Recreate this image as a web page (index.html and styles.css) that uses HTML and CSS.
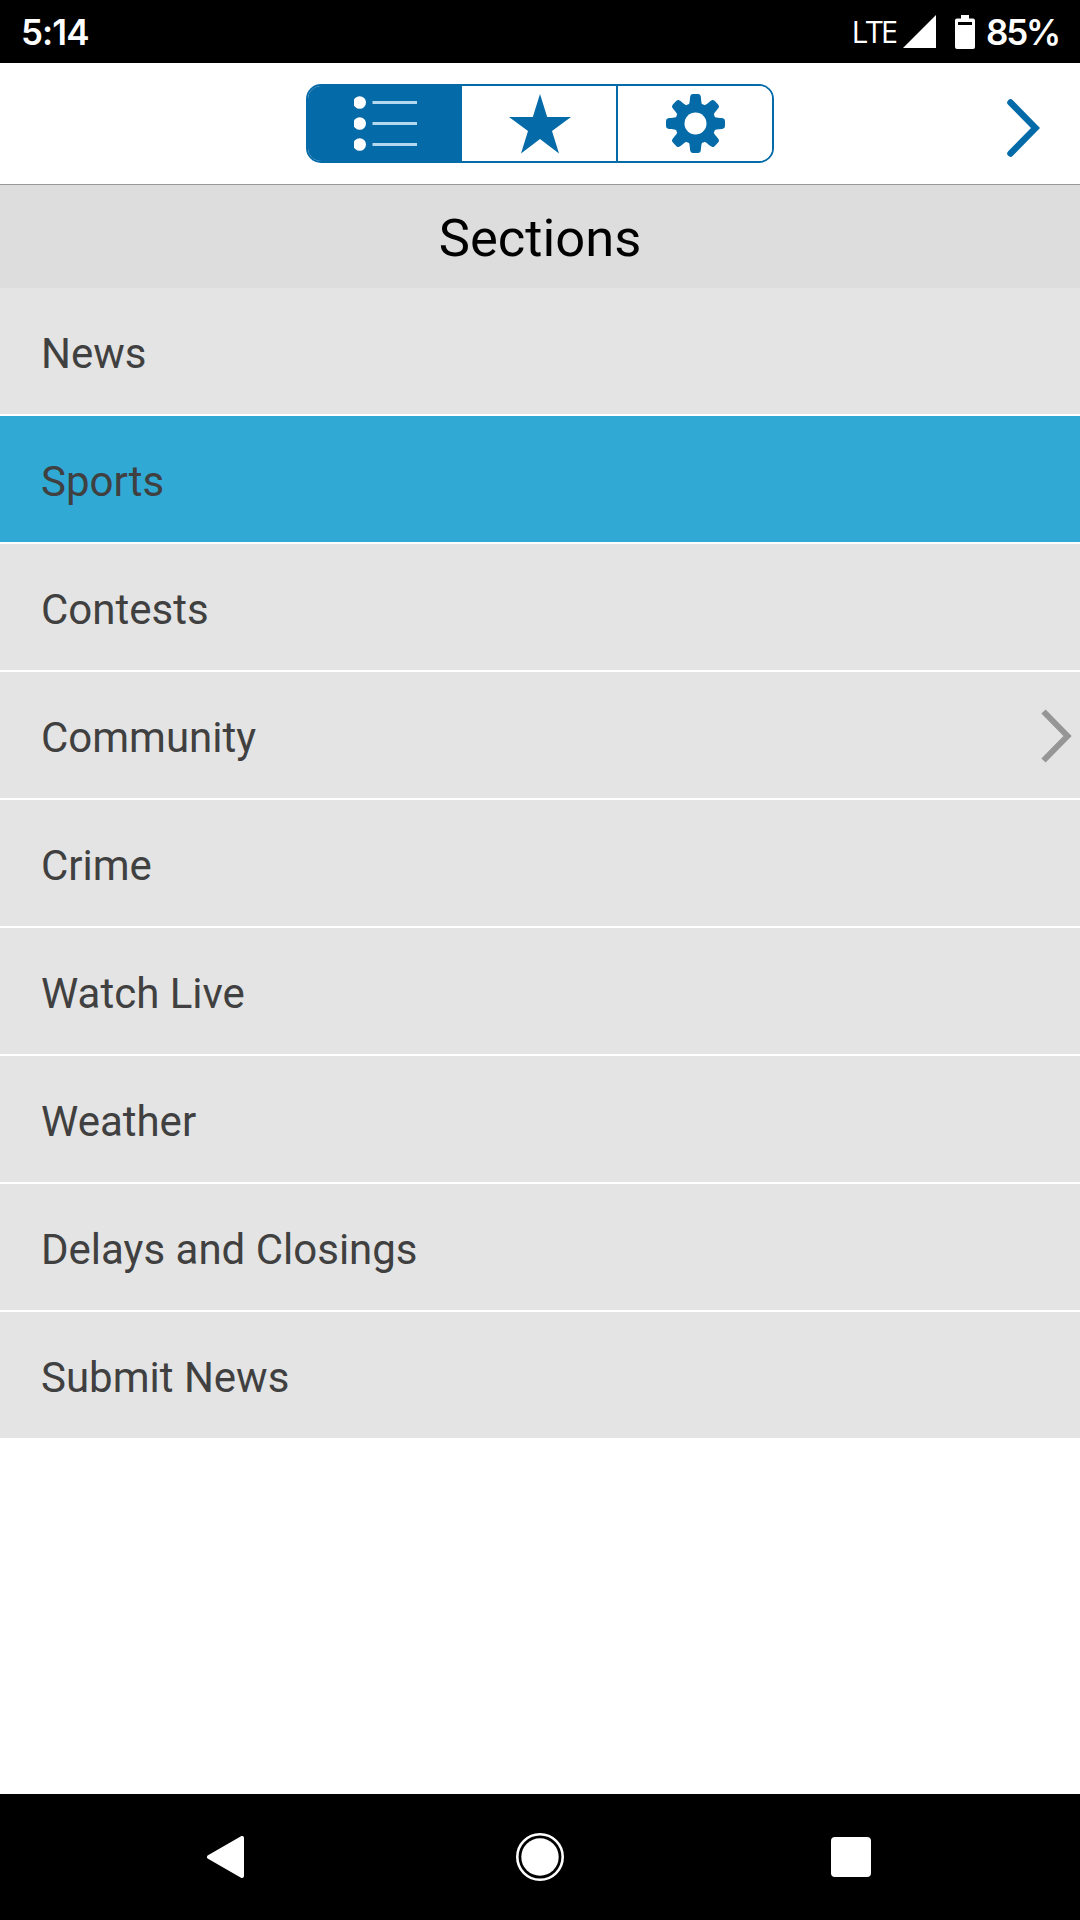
FILE: index.html
```html
<!DOCTYPE html>
<html lang="en">
<head>
  <meta charset="UTF-8">
  <title>Sections</title>
  <meta name="viewport" content="width=device-width, initial-scale=1.0">
  <link rel="stylesheet" href="styles.css">
</head>
<body>

<div class="screen">
  <!-- Status bar -->
  <div class="status-bar">
    <span class="clock">5:14</span>
    <div class="status-icons">
      <span class="network">LTE</span>
      <svg class="signal" width="33" height="33" viewBox="0 0 33 33"><path d="M33 0V33H0Z" fill="#fff"/></svg>
      <svg class="battery" width="20" height="34" viewBox="0 0 20 34"><path fill="#fff" fill-rule="evenodd" d="M6 0h8v3.500h4q2 0 2 2V32q0 2-2 2H2q-2 0-2-2V5.500q0-2 2-2h4ZM3 7v3h14V7Z"/></svg>
      <span class="percent">85%</span>
    </div>
  </div>

  <!-- Top tabs -->
  <header class="header">
    <div class="tabs">
      <button class="tab-btn active" aria-label="Sections">
        <svg width="63" height="57" viewBox="0 0 63 57">
          <g fill="#fff">
            <circle cx="5.700" cy="7.500" r="6.300"/>
            <circle cx="5.700" cy="28.500" r="6.300"/>
            <circle cx="5.700" cy="49.500" r="6.300"/>
          </g>
          <path d="M18.500 7.500H63M18.500 28.500H63M18.500 49.500H63" stroke="#b4d8ed" stroke-width="3"/>
        </svg>
      </button>
      <button class="tab-btn" aria-label="Favorites">
        <svg class="star" width="62" height="60" viewBox="0 0 62 60"><path fill="#056ba8" d="M31 0L38.200 23H62L43 37L50 59.500L31 45L12 59.500L19 37L0 23H23.800Z"/></svg>
      </button>
      <button class="tab-btn" aria-label="Settings">
        <svg width="59" height="59" viewBox="0 0 59 59">
          <g fill="#056ba8">
            <path id="tooth" d="M20 14C24.500 11 23.500 6 24.300 2Q24.700 0 27 0H32Q34.300 0 34.700 2C35.500 6 34.500 11 39 14V45C34.500 48 35.500 53 34.700 57Q34.300 59 32 59H27Q24.700 59 24.300 57C23.500 53 24.500 48 20 45Z"/>
            <use href="#tooth" transform="rotate(45 29.500 29.500)"/>
            <use href="#tooth" transform="rotate(90 29.500 29.500)"/>
            <use href="#tooth" transform="rotate(135 29.500 29.500)"/>
            <circle cx="29.500" cy="29.500" r="20.500"/>
          </g>
          <circle cx="29.500" cy="29.500" r="11" fill="#fff"/>
        </svg>
      </button>
    </div>
    <svg class="next" width="34" height="60" viewBox="0 0 34 60"><path d="M4.500 4.500L29.500 30L4.500 55.500" fill="none" stroke="#056ba8" stroke-width="6.500" stroke-linecap="round"/></svg>
  </header>

  <h1 class="title">Sections</h1>

  <ul class="sections">
    <li>News</li>
    <li class="selected">Sports</li>
    <li>Contests</li>
    <li>Community
      <svg width="32" height="56" viewBox="0 0 32 56"><path d="M3.500 3.500L27.500 28L3.500 52.500" fill="none" stroke="#969696" stroke-width="6"/></svg>
    </li>
    <li>Crime</li>
    <li>Watch Live</li>
    <li>Weather</li>
    <li>Delays and Closings</li>
    <li>Submit News</li>
  </ul>

  <!-- System navigation -->
  <nav class="nav-bar">
    <svg width="37" height="42" viewBox="0 0 37 42"><path d="M2 21L35 2V40Z" fill="#fff" stroke="#fff" stroke-width="4" stroke-linejoin="round"/></svg>
    <svg class="home" width="48" height="48" viewBox="0 0 48 48"><circle cx="24" cy="24" r="22.700" fill="none" stroke="#fff" stroke-width="2.600"/><circle cx="24" cy="24" r="18.700" fill="#fff"/></svg>
    <svg width="40" height="40" viewBox="0 0 40 40"><rect width="40" height="40" rx="4" fill="#fff"/></svg>
  </nav>
</div>

</body>
</html>
```

FILE: styles.css
```css
* {
  box-sizing: border-box;
}

body {
  margin: 0;
  background: #fff;
  font-family: Roboto, sans-serif;
}

svg {
  display: block;
  flex: none;
}

.screen {
  display: flex;
  flex-direction: column;
  width: 1080px;
  height: 1920px;
}

.status-bar {
  display: flex;
  justify-content: space-between;
  align-items: center;
  height: 63px;
  padding: 0 21px;
  background: #000;
  color: #fff;
}

.clock,
.percent {
  font-family: Inter, sans-serif;
  font-size: 35px;
  font-weight: 600;
  line-height: 63px;
  padding-top: 2px;
  letter-spacing: -0.9px;
}

.percent {
  width: 73px;
  letter-spacing: -2.2px;
}

.status-icons {
  display: flex;
  align-items: center;
}

.network {
  font-family: "Open Sans", sans-serif;
  font-size: 31px;
  letter-spacing: -2px;
  line-height: 60px;
  padding-bottom: 2px;
}

.signal {
  margin: 0 19px 0 7px;
}

.battery {
  margin-right: 11px;
}

.header {
  display: grid;
  grid-template-columns: 1fr 468px 1fr;
  align-items: center;
  height: 122px;
  border-bottom: 1px solid #999;
}

.tabs {
  grid-column: 2;
  display: flex;
  height: 79px;
  border: 2px solid #056ba8;
  border-radius: 15px;
  overflow: hidden;
}

.tab-btn {
  display: flex;
  flex: 1;
  justify-content: center;
  align-items: center;
  padding: 0;
  border: none;
  background: #fff;
}

.tab-btn.active {
  background: #056ba8;
}

.tab-btn:last-child {
  border-left: 2px solid #056ba8;
}

.star {
  margin-left: 1px;
}

.next {
  justify-self: end;
  margin: 8px 40px 0 0;
}

.title {
  height: 103px;
  margin: 0;
  background: #ddd;
  color: #000;
  font-size: 52.500px;
  font-weight: 400;
  line-height: 106px;
  text-align: center;
}

.sections {
  display: flex;
  flex-direction: column;
  gap: 2px;
  margin: 0;
  padding: 0;
  list-style: none;
}

.sections li {
  display: flex;
  justify-content: space-between;
  align-items: center;
  height: 126px;
  padding: 6px 8px 0 41px;
  background: #e4e4e4;
  color: #404040;
  font-size: 42px;
  line-height: 120px;
}

.sections li svg {
  margin-bottom: 4px;
}

.sections li.selected {
  background: #30a9d4;
}

.nav-bar {
  display: flex;
  justify-content: space-between;
  align-items: center;
  height: 126px;
  margin-top: auto;
  padding: 0 209px 0 207px;
  background: #000;
}

.home {
  margin-left: 5px;
}
```
